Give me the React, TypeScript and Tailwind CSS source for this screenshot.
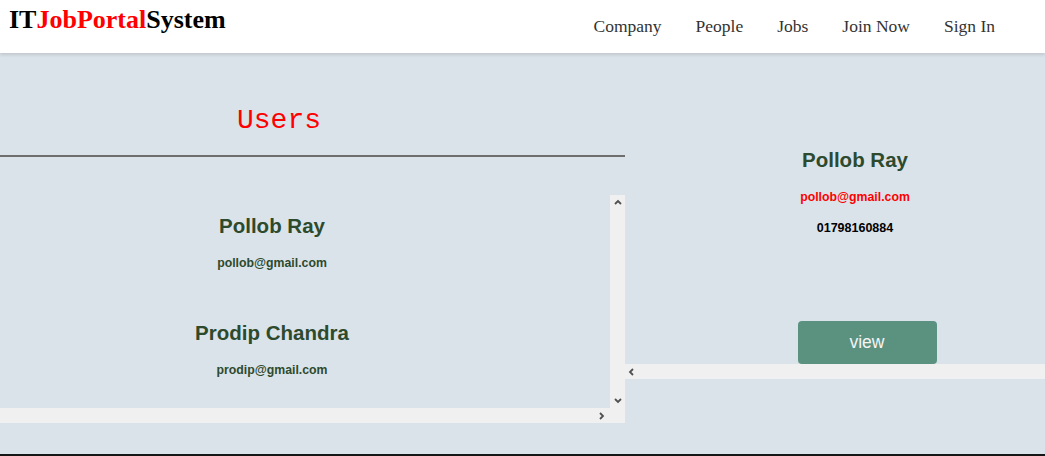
import React from 'react';

const users = [
    { name: 'Pollob Ray', email: 'pollob@gmail.com' },
    { name: 'Prodip Chandra', email: 'prodip@gmail.com' },
];

const Chevron: React.FC<{ dir: 'up' | 'down' | 'left' | 'right' }> = ({ dir }) => {
    const points = {
        up: '1,5 4,2 7,5',
        down: '1,2 4,5 7,2',
        left: '5,1 2,4 5,7',
        right: '2,1 5,4 2,7',
    }[dir];
    return (
        <svg width="8" height="8" viewBox="0 0 8 8">
            <polyline points={points} fill="none" stroke="#505050" strokeWidth="1.8" />
        </svg>
    );
};

const App: React.FC = () => {
    return (
        <div className="min-h-screen bg-[#dbe3ea]" style={{ fontFamily: 'Arial, "Liberation Sans", sans-serif' }}>
            {/* Header */}
            <header className="relative z-10 h-[53px] bg-white shadow-[0_2px_3px_rgba(0,0,0,0.12)] flex items-start justify-between">
                <h1 className="pl-[9px] pt-[5px] text-[26px] font-bold leading-[30px] text-black" style={{ fontFamily: '"Liberation Serif", "Times New Roman", serif' }}>
                    IT<span className="text-[#ff0000]">JobPortal</span>System
                </h1>
                <nav className="flex items-center gap-[34px] pr-[50px] h-full text-[17.5px] text-[#333]" style={{ fontFamily: '"Liberation Serif", "Times New Roman", serif' }}>
                    <a>Company</a>
                    <a>People</a>
                    <a>Jobs</a>
                    <a>Join Now</a>
                    <a>Sign In</a>
                </nav>
            </header>

            {/* Main */}
            <main className="flex h-[401px]">
                {/* Left column */}
                <section className="w-[625px] shrink-0">
                    <h2 className="pt-[52px] pr-[67px] text-center text-[28px] leading-[32px] text-[#ff0000]" style={{ fontFamily: '"Liberation Mono", "DejaVu Sans Mono", monospace' }}>
                        Users
                    </h2>
                    <div className="mt-[18px] h-[2px] bg-[#6e6e6e]" />

                    <div className="mt-[38px] flex h-[228px]">
                        <div className="flex w-[610px] flex-col">
                            <div className="h-[213px] overflow-hidden pr-[66px] pt-[19px]">
                                <div className="flex flex-col gap-[50px]">
                                    {users.map((u) => (
                                        <div key={u.email} className="text-center">
                                            <h3 className="text-[20.5px] font-bold leading-[24px] text-[#2d4a2d]">{u.name}</h3>
                                            <p className="mt-[17px] text-[12.3px] font-bold leading-[16px] text-[#2d4a2d]">{u.email}</p>
                                        </div>
                                    ))}
                                </div>
                            </div>
                            <div className="flex h-[15px] items-center justify-end bg-[#f0f0f0] pr-[4px]">
                                <Chevron dir="right" />
                            </div>
                        </div>
                        <div className="flex w-[15px] flex-col bg-[#f0f0f0]">
                            <div className="flex h-[15px] items-center justify-center">
                                <Chevron dir="up" />
                            </div>
                            <div className="flex-1" />
                            <div className="flex h-[15px] items-center justify-center">
                                <Chevron dir="down" />
                            </div>
                            <div className="h-[15px]" />
                        </div>
                    </div>
                </section>

                {/* Right column */}
                <section className="flex-1">
                    <div className="h-[311px] overflow-hidden pt-[95px]">
                        <div className="pl-[40px] text-center">
                            <h3 className="text-[20.5px] font-bold leading-[24px] text-[#2d4a2d]">Pollob Ray</h3>
                            <p className="mt-[17px] text-[12.3px] font-bold leading-[16px] text-[#ff0000]">pollob@gmail.com</p>
                            <p className="mt-[15px] text-[12.5px] font-bold leading-[16px] text-black">01798160884</p>
                        </div>
                        <div className="mt-[85px] flex justify-center pl-[64px]">
                            <button className="h-[43px] w-[139px] rounded-[4px] bg-[#5b917f] text-[17.5px] text-[#f4f4f4]">view</button>
                        </div>
                    </div>
                    <div className="flex h-[15px] items-center bg-[#f0f0f0] pl-[3px]">
                        <Chevron dir="left" />
                    </div>
                </section>
            </main>

            <footer className="h-[2px] bg-[#151515]" />
        </div>
    );
};

export default App;
